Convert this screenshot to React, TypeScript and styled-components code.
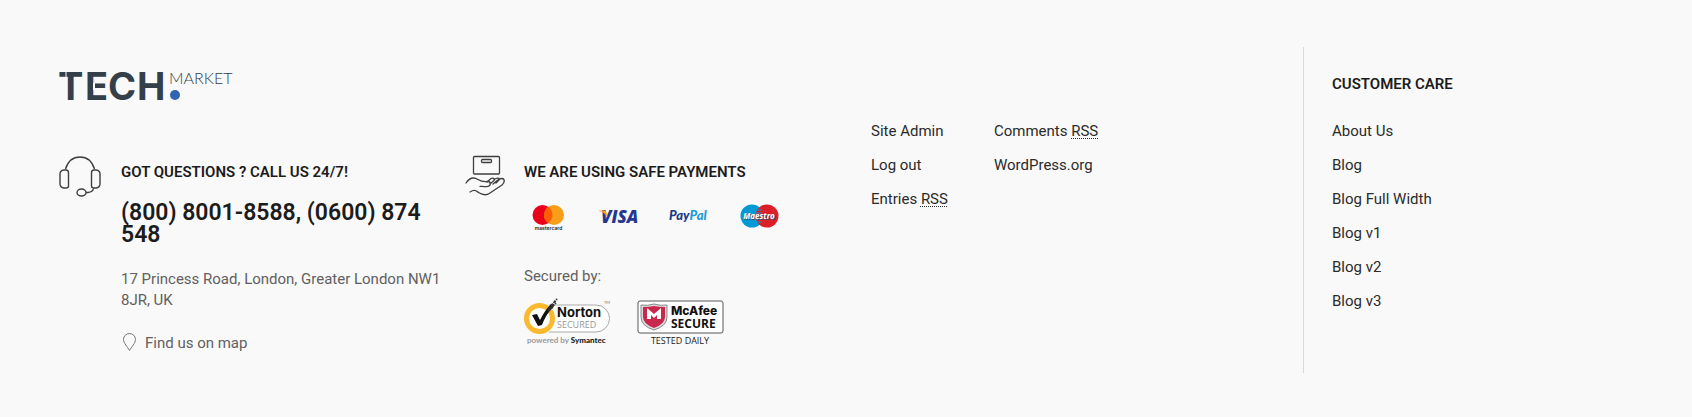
import React from "react";
import styled, { createGlobalStyle } from "styled-components";

const GlobalStyle = createGlobalStyle`
  * { box-sizing: border-box; }
  body {
    margin: 0;
    background: #f9f9f9;
    color: #2b2b2b;
    font: 400 15px/20px Roboto, "Liberation Sans", sans-serif;
  }
  h2, p, ul, address { margin: 0; padding: 0; font-style: normal; }
  a { color: inherit; text-decoration: none; }
`;

const Footer = styled.footer`
  display: grid;
  grid-template-columns: 812fr 432fr 330fr;
  padding: 47px 59px 43px;
`;

const Main = styled.section`
  padding-top: 24px;
`;

const HomeLink = styled.a`
  display: block;
  width: max-content;
  svg { display: block; overflow: visible; }
`;

const Columns = styled.div`
  display: grid;
  grid-template-columns: 1fr 1fr;
  margin-top: 50px;
`;

const Block = styled.section`
  display: grid;
  grid-template-columns: 42px minmax(0, 1fr);
  column-gap: 20px;
  padding-right: 20px;
`;

const PaymentBlock = styled(Block)`
  column-gap: 17px;
  padding-right: 0;
`;

const Title = styled.h2`
  font-size: 15px;
  line-height: 20px;
  font-weight: 600;
  color: #1c1c1c;
  text-transform: uppercase;
`;

const BlockBody = styled.div`
  padding-top: 7px;
`;

const Phone = styled.p`
  margin-top: 20px;
  font-size: 23px;
  line-height: 22px;
  font-weight: 600;
  color: #1c1c1c;
`;

const Address = styled.address`
  margin-top: 23px;
  line-height: 21px;
  color: #626060;
`;

const MapLink = styled.a`
  display: flex;
  align-items: center;
  gap: 9px;
  width: max-content;
  margin-top: 22px;
  && { color: #626060; }
`;

const Cards = styled.ul`
  display: flex;
  list-style: none;
  margin-top: 22px;
`;

const Card = styled.li`
  width: 71px;
  height: 32px;
  svg { display: block; }
`;

const Secured = styled.p`
  margin-top: 30px;
  color: #626060;
`;

const Seals = styled.div`
  display: flex;
  gap: 26px;
  margin-top: 12px;
`;

const MetaLinks = styled.nav`
  display: flex;
  gap: 46px;
  padding-top: 74px;
`;

const LinkList = styled.ul`
  list-style: none;
  display: flex;
  flex-direction: column;
  gap: 14px;
`;

const Abbr = styled.abbr`
  text-decoration: underline dotted 1px;
  text-underline-offset: 2px;
  text-decoration-skip-ink: none;
`;

const Care = styled.nav`
  border-left: 1px solid #d9d9d9;
  padding: 27px 0 62px 28px;
  ${LinkList} { margin-top: 27px; }
`;

const Logo = () => (
  <svg width="178" height="34" viewBox="0 0 178 34" role="img" aria-label="Tech Market">
    <text y="29" x="-1 26 49 78" fill="#343f49" fontFamily="Inter" fontWeight="700" fontSize="38">TECH</text>
    <path d="M7 0v7" stroke="#f9f9f9" strokeWidth="1" />
    <path d="M35 12v7" stroke="#f9f9f9" strokeWidth="2" />
    <text x="110" y="13" fill="#343f49" fontFamily="Lato" fontWeight="300" fontSize="16">MARKET</text>
    <circle cx="116" cy="24" r="5" fill="#3264b4" />
  </svg>
);

const Headset = () => (
  <svg width="42" height="42" viewBox="0 0 42 42" fill="none" stroke="#3f3f3f" strokeWidth="1.400" aria-hidden="true">
    <path d="M6.500 14C9 6 14 2 21 2s12 4 14.500 12" />
    <path d="M5 15h2q2.500 0 2.500 3v13q0 2-2.500 2H4.500Q1 32 1 29V19q0-3.500 4-4ZM35 15h2q4 .5 4 4v10q0 3-3.500 4H35q-2.500 0-2.500-2V18q0-3 2.500-3Z" />
    <ellipse cx="22.500" cy="37.500" rx="4.500" ry="3.500" />
    <path d="M27 37.500h2q5-.5 5.500-4" />
  </svg>
);

const BoxHand = () => (
  <svg width="42" height="42" viewBox="0 0 42 42" fill="none" stroke="#3f3f3f" strokeWidth="1.300" strokeLinejoin="round" strokeLinecap="round" aria-hidden="true">
    <rect x="8.500" y="1.500" width="26" height="17.500" rx="1" />
    <rect x="16.500" y="4.500" width="10" height="3" rx="1" />
    <path d="M1 28C5 22 9 22 13 24.500c3 2 6 2.500 10 2 3 0 3 4.500 0 4.800-3 .5-5 .2-8 0" />
    <path d="M5 37c5-3 6-1 9 .8 4 2.500 7 3 11 .2l12-8c3-2.500 3-6 0-6.500-3-.2-6 3-9 5.500M22 27l4-3.500c2-1 4 0 3 2l-3.500 3M29 24.500c3-2 6-2 5 .5l-3 3" />
  </svg>
);

const Pin = () => (
  <svg width="15" height="20" viewBox="0 0 15 20" fill="none" stroke="#777" aria-hidden="true">
    <path d="M8.500 17.500C6.500 14 2.500 10 2.500 6.500a6 6 0 0 1 12 0c0 3.500-4 7.500-6 11Z" />
  </svg>
);

const Mastercard = () => (
  <svg width="48" height="30" viewBox="0 0 48 30" role="img" aria-label="Mastercard">
    <circle cx="18.500" cy="11" r="10" fill="#eb001b" />
    <circle cx="30" cy="11" r="10" fill="#f79e1b" />
    <path d="M24.250 2.800a10 10 0 0 1 0 16.400 10 10 0 0 1 0-16.400Z" fill="#ff5f00" />
    <text x="24.500" y="26" textAnchor="middle" fontFamily="Inter" fontWeight="600" fontSize="5" fill="#222">mastercard</text>
  </svg>
);

const Visa = () => (
  <svg width="48" height="30" viewBox="0 0 48 30" role="img" aria-label="Visa">
    <text x="6" y="19" fontFamily="Open Sans" fontStyle="italic" fontWeight="800" fontSize="17" fill="#26378f">VISA</text>
    <path d="M4 6.500h5q2 0 2.500 2l1 4.500Q9 8 4 7Z" fill="#f2a51f" />
  </svg>
);

const PayPal = () => (
  <svg width="48" height="30" viewBox="0 0 48 30" role="img" aria-label="PayPal">
    <text x="3" y="16" fontFamily="Lato" fontStyle="italic" fontWeight="900" fontSize="13" fill="#173a86">Pay<tspan fill="#1d9bd8">Pal</tspan></text>
  </svg>
);

const Maestro = () => (
  <svg width="48" height="30" viewBox="0 0 48 30" role="img" aria-label="Maestro">
    <circle cx="15" cy="12" r="11.500" fill="#0099d4" />
    <circle cx="30" cy="12" r="11.500" fill="#dc2029" />
    <path d="M19 6h6M18 9h7M18 12h7M18 15h7M19 18h6" stroke="#0099d4" />
    <text x="23" y="16" textAnchor="middle" fontFamily="Open Sans" fontStyle="italic" fontWeight="700" fontSize="8" fill="#46516a">Maestro</text>
    <text x="22" y="15" textAnchor="middle" fontFamily="Open Sans" fontStyle="italic" fontWeight="700" fontSize="8" fill="#fff">Maestro</text>
  </svg>
);

const Norton = () => (
  <svg width="87" height="48" viewBox="0 0 87 48" role="img" aria-label="Norton Secured, powered by Symantec">
    <path d="M25 7h47a13.500 13.500 0 0 1 0 27H25" fill="#fff" stroke="#aaa" />
    <circle cx="15.500" cy="20.500" r="13" fill="#fff" stroke="#fdb92e" strokeWidth="5" />
    <path d="m8 17 5-1 3 6Q21 12 27 6l3 2Q22 16 18 27l-4 1Z" fill="#111" />
    <path d="m27 8 6-7M25 11l7-6M24 13l5-4" stroke="#333" strokeWidth="2" strokeDasharray="3 1" />
    <text x="33" y="19" fontFamily="Inter" fontWeight="700" fontSize="13" fill="#111">Norton</text>
    <text x="33" y="30" fontFamily="Open Sans" fontSize="9" fill="#999">SECURED</text>
    <text x="80" y="6" fontFamily="Lato" fontSize="4" fill="#777">TM</text>
    <text x="3" y="45" fontFamily="Lato" fontWeight="700" fontSize="8" fill="#999">powered by <tspan fill="#222" fontWeight="900">Symantec</tspan></text>
  </svg>
);

const McAfee = () => (
  <svg width="87" height="48" viewBox="0 0 87 48" role="img" aria-label="McAfee Secure, tested daily">
    <rect x="1" y="3" width="85" height="32" rx="2" fill="#fff" stroke="#555a55" />
    <path d="M4 7q7 1 13-1 6 2 13 1v12q0 9-13 13Q4 28 4 19Z" fill="#ddd" stroke="#888" />
    <path d="M6 9q6 0 11-1 5 1 11 1v10q0 7-11 11Q6 26 6 19Z" fill="#c8284c" />
    <path d="M10 21V10l7 6 7-6v11h-4v-4l-3 3-3-3v4Z" fill="#fff" />
    <text x="34" y="17" fontFamily="Inter" fontWeight="800" fontSize="12" fill="#111">McAfee</text>
    <text x="34" y="30" fontFamily="Open Sans" fontWeight="700" fontSize="12" fill="#111">SECURE</text>
    <text x="43" y="46" textAnchor="middle" fontFamily="Open Sans" fontSize="9" fill="#222">TESTED DAILY</text>
  </svg>
);

const careLinks = ["About Us", "Blog", "Blog Full Width", "Blog v1", "Blog v2", "Blog v3"];

export default function App() {
  return (
    <>
      <GlobalStyle />
      <Footer>
        <Main>
          <HomeLink href="#home"><Logo /></HomeLink>
          <Columns>
            <Block>
              <Headset />
              <BlockBody>
                <Title>Got questions ? Call us 24/7!</Title>
                <Phone>(800) 8001-8588, (0600) 874 548</Phone>
                <Address>17 Princess Road, London, Greater London NW1 8JR, UK</Address>
                <MapLink href="#map"><Pin />Find us on map</MapLink>
              </BlockBody>
            </Block>
            <PaymentBlock>
              <BoxHand />
              <BlockBody>
                <Title>We are using safe payments</Title>
                <Cards>
                  <Card><Mastercard /></Card>
                  <Card><Visa /></Card>
                  <Card><PayPal /></Card>
                  <Card><Maestro /></Card>
                </Cards>
                <Secured>Secured by:</Secured>
                <Seals><Norton /><McAfee /></Seals>
              </BlockBody>
            </PaymentBlock>
          </Columns>
        </Main>
        <MetaLinks aria-label="Site">
          <LinkList>
            <li><a href="#admin">Site Admin</a></li>
            <li><a href="#logout">Log out</a></li>
            <li><a href="#entries">Entries <Abbr>RSS</Abbr></a></li>
          </LinkList>
          <LinkList>
            <li><a href="#comments">Comments <Abbr>RSS</Abbr></a></li>
            <li><a href="#wordpress">WordPress.org</a></li>
          </LinkList>
        </MetaLinks>
        <Care aria-labelledby="care-title">
          <Title id="care-title">Customer Care</Title>
          <LinkList>
            {careLinks.map((label) => (
              <li key={label}><a href="#blog">{label}</a></li>
            ))}
          </LinkList>
        </Care>
      </Footer>
    </>
  );
}
